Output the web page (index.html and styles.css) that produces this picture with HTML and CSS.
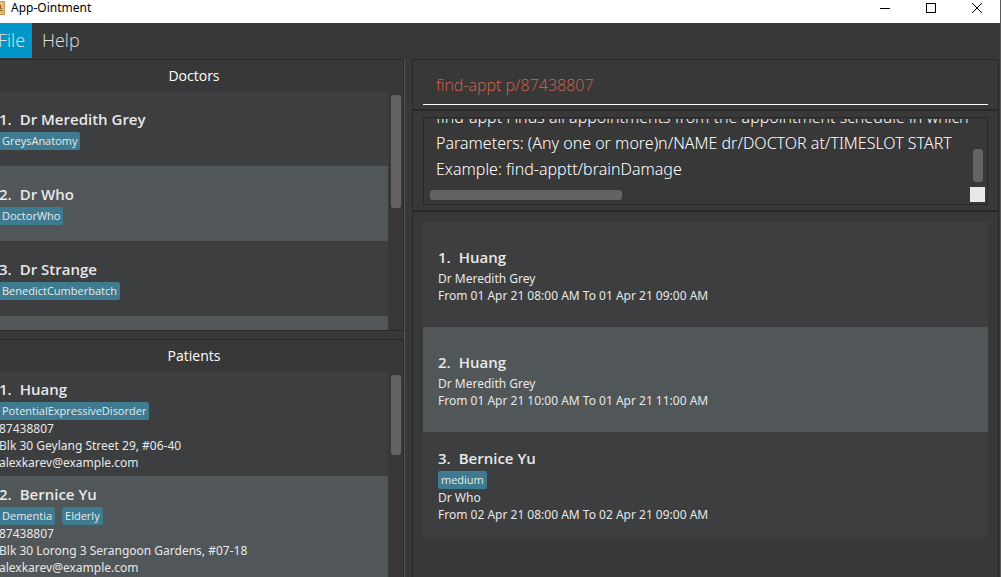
FILE: index.html
```html
<!DOCTYPE html>
<html lang="en">
<head>
<meta charset="utf-8">
<title>App-Ointment</title>
<link rel="stylesheet" href="styles.css">
</head>
<body>
<div class="window">
  <header class="titlebar">
    <svg class="app-icon" width="5" height="14" viewBox="0 0 5 14" aria-hidden="true">
      <rect width="5" height="14" fill="#c99a4e"/>
      <rect width="4" height="12" y="1" fill="#e6bd78"/>
      <path d="M0 4h1v3h1v1H0zM0 9h3v1H0z" fill="#8a6530"/>
    </svg>
    <h1 class="app-title">App-Ointment</h1>
    <div class="window-controls">
      <button class="control" aria-label="Minimize"><svg width="12" height="12" viewBox="0 0 12 12"><path d="M1 6.500h10" stroke="#000" fill="none"/></svg></button>
      <button class="control" aria-label="Maximize"><svg width="12" height="12" viewBox="0 0 12 12"><rect x="1.500" y="1.500" width="9" height="9" stroke="#000" fill="none"/></svg></button>
      <button class="control" aria-label="Close"><svg width="12" height="12" viewBox="0 0 12 12"><path d="M1 1l10 10M11 1L1 11" stroke="#000" fill="none"/></svg></button>
    </div>
  </header>
  <nav class="menubar">
    <button class="menu menu-open">File</button>
    <button class="menu">Help</button>
  </nav>
  <main class="split">
    <div class="people">
      <section class="panel doctors">
        <h2 class="panel-title">Doctors</h2>
        <div class="scroll-area">
          <ol class="list">
            <li class="cell doctor"><h3 class="name"><span>1.</span><span>Dr Meredith Grey</span></h3><div class="tags"><span class="tag">GreysAnatomy</span></div></li>
            <li class="cell doctor"><h3 class="name"><span>2.</span><span>Dr Who</span></h3><div class="tags"><span class="tag">DoctorWho</span></div></li>
            <li class="cell doctor"><h3 class="name"><span>3.</span><span>Dr Strange</span></h3><div class="tags"><span class="tag">BenedictCumberbatch</span></div></li>
            <li class="cell doctor"></li>
          </ol>
          <div class="track"><div class="thumb thumb-doctors"></div></div>
        </div>
      </section>
      <section class="panel patients">
        <h2 class="panel-title">Patients</h2>
        <div class="scroll-area">
          <ol class="list">
            <li class="cell"><h3 class="name"><span>1.</span><span>Huang</span></h3><div class="tags"><span class="tag">PotentialExpressiveDisorder</span></div><p class="detail">87438807</p><p class="detail">Blk 30 Geylang Street 29, #06-40</p><p class="detail">alexkarev@example.com</p></li>
            <li class="cell"><h3 class="name"><span>2.</span><span>Bernice Yu</span></h3><div class="tags"><span class="tag">Dementia</span><span class="tag">Elderly</span></div><p class="detail">87438807</p><p class="detail">Blk 30 Lorong 3 Serangoon Gardens, #07-18</p><p class="detail">alexkarev@example.com</p></li>
          </ol>
          <div class="track"><div class="thumb thumb-patients"></div></div>
        </div>
      </section>
    </div>
    <div class="work">
      <section class="command-panel">
        <input class="command" type="text" aria-label="Command" value="find-appt p/87438807" spellcheck="false">
      </section>
      <section class="result-panel">
        <div class="result-box">
          <div class="result-view">
            <textarea class="result" aria-label="Result" rows="3" wrap="off" readonly spellcheck="false">find-appt Finds all appointments from the appointment schedule in which
Parameters: (Any one or more)n/NAME dr/DOCTOR at/TIMESLOT START
Example: find-apptt/brainDamage</textarea>
          </div>
          <div class="result-track"><div class="thumb thumb-result"></div></div>
          <div class="result-hbar"><div class="hthumb"></div></div>
          <div class="corner"></div>
        </div>
      </section>
      <section class="appointments">
        <ol class="list">
          <li class="cell"><h3 class="name"><span>1.</span><span>Huang</span></h3><p class="detail">Dr Meredith Grey</p><p class="detail">From 01 Apr 21 08:00 AM To 01 Apr 21 09:00 AM</p></li>
          <li class="cell"><h3 class="name"><span>2.</span><span>Huang</span></h3><p class="detail">Dr Meredith Grey</p><p class="detail">From 01 Apr 21 10:00 AM To 01 Apr 21 11:00 AM</p></li>
          <li class="cell"><h3 class="name"><span>3.</span><span>Bernice Yu</span></h3><div class="tags"><span class="tag">medium</span></div><p class="detail">Dr Who</p><p class="detail">From 02 Apr 21 08:00 AM To 02 Apr 21 09:00 AM</p></li>
        </ol>
      </section>
    </div>
  </main>
</div>
</body>
</html>
```
FILE: styles.css
```css
* { box-sizing: border-box; margin: 0; padding: 0; }
body {
  font-family: "Open Sans", "Noto Sans", sans-serif;
  font-size: 12px;
  color: #e8e8e8;
  background: #383838;
}
button, input, textarea { font: inherit; color: inherit; border: 0; background: none; outline: 0; }
.window { display: flex; flex-direction: column; height: 100vh; overflow: hidden; border-right: 1px solid #5a5a5a; }

.titlebar { display: flex; align-items: center; height: 23px; padding-bottom: 8px; background: #fff; color: #000; flex: none; }
.app-title { margin-left: 6px; font-family: "Noto Sans", sans-serif; font-size: 12px; font-weight: 400; line-height: 16px; }
.window-controls { display: flex; margin-left: auto; }
.control { display: flex; justify-content: center; align-items: center; width: 46px; height: 15px; }

.menubar { display: flex; height: 36px; flex: none; }
.menu { height: 35px; padding: 0 10px; font-size: 18px; font-weight: 300; line-height: 35px; color: #e0e0e0; }
.menu-open { width: 32px; padding: 0; text-align: left; text-indent: -2px; background: #0096c9; }

.split { display: grid; grid-template-columns: 412fr 588fr; flex: 1; min-height: 0; }
.people { display: grid; grid-template-rows: 272fr 238fr; gap: 8px; min-height: 0; margin-right: 7px; border-right: 1px solid #565656; }
.panel { display: flex; flex-direction: column; min-height: 0; overflow: hidden; border: 1px solid #282828; border-left: 0; }
.patients { border-bottom: 0; }
.panel-title { flex: none; height: 31px; padding-right: 15px; font-size: 14px; font-weight: 500; line-height: 31px; text-align: center; color: #fff; }
.scroll-area { display: flex; flex: 1; min-height: 0; }
.list { flex: 1; min-width: 0; list-style: none; }
.track { width: 15px; padding: 4px 2px 0 3px; }
.thumb { width: 10px; border-radius: 3px; background: #636363; }
.thumb-doctors { height: 113px; }
.thumb-patients { height: 80px; }

.cell { display: flex; flex-direction: column; justify-content: center; height: 105px; background: #3c3e3f; }
.cell:nth-child(even) { background: #515658; }
.doctor { height: 75px; }
.patients .cell { padding-top: 1px; }
.people .name, .people .detail, .people .tags { margin-left: -1px; }
.name { display: flex; gap: 8px; font-size: 15px; font-weight: 600; line-height: 25px; }
.tags { display: flex; gap: 7px; height: 18px; }
.tag { height: 18px; padding: 0 3px; border-radius: 2px; background: #3e7b91; font-size: 11px; line-height: 18px; }
.detail { font-family: "Noto Sans", sans-serif; font-size: 12px; line-height: 17px; white-space: nowrap; }

.work { display: flex; flex-direction: column; min-width: 0; min-height: 0; margin-right: 1px; border: 1px solid #282828; border-bottom: 0; }
.command-panel { height: 51px; padding: 5px 10px; border-bottom: 2px solid #282828; flex: none; }
.command { display: block; width: 100%; height: 40px; padding: 0 13px; border-bottom: 1px solid #fff; font-size: 16px; font-weight: 300; color: #d06651; }
.result-panel { height: 101px; padding: 6px 10px; border-bottom: 2px solid #282828; flex: none; }
.result-box { display: grid; grid-template-columns: 1fr 18px; grid-template-rows: 1fr 19px; height: 88px; padding-top: 1px; border: 1px solid #282828; }
.result-view { overflow: hidden; }
.result { display: block; width: 100%; height: 78px; margin-top: -15px; padding-left: 12px; resize: none; overflow: hidden; font-family: "Noto Sans", sans-serif; font-size: 16px; font-weight: 300; line-height: 26px; color: #fff; white-space: pre; }
.result-track { display: flex; align-items: flex-end; padding: 0 4px 3px; }
.thumb-result { height: 33px; }
.result-hbar { padding: 5px 6px 0; }
.hthumb { width: 36%; height: 10px; border-radius: 3px; background: #636363; }
.corner { width: 15px; height: 15px; margin: 2px 0 0 1px; background: #e8e8e8; }
.appointments { flex: 1; min-height: 0; padding: 10px 10px 0; }
.appointments .cell { padding: 0 15px; }
```
